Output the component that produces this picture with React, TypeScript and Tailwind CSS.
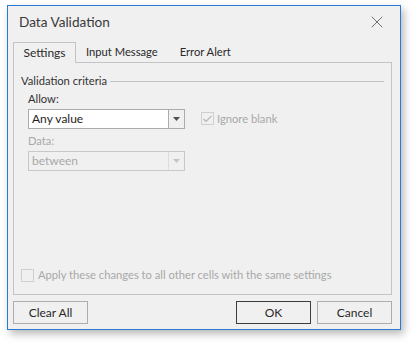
import { X } from 'lucide-react';

function Arrow({ disabled = false }: { disabled?: boolean }) {
  return (
    <svg width="7" height="4" viewBox="0 0 7 4">
      <path d="M0 0h7L3.5 4z" fill={disabled ? '#c4c4c4' : '#505050'} />
    </svg>
  );
}

function Combo({ value, disabled = false }: { value: string; disabled?: boolean }) {
  return (
    <div
      className={`flex h-[20px] w-[157px] border ${
        disabled ? 'border-[#c8c8c8] bg-[#f0f0f0] text-[#a8a8a8]' : 'border-[#acacac] bg-white text-[#1e1e1e]'
      }`}
    >
      <div className="flex-1 pl-[3px] text-[12px] leading-[18px]">{value}</div>
      <div
        className={`flex w-[16px] items-center justify-center border-l ${
          disabled ? 'border-[#dcdcdc]' : 'border-[#acacac]'
        } bg-[#f0f0f0]`}
      >
        <Arrow disabled={disabled} />
      </div>
    </div>
  );
}

function Check({ checked = false }: { checked?: boolean }) {
  return (
    <div className="flex h-[13px] w-[13px] items-center justify-center border border-[#cfcfcf] bg-[#f0f0f0]">
      {checked && (
        <svg width="9" height="8" viewBox="0 0 9 8">
          <path d="M0.5 4l2.5 2.5L8.5 0.8" fill="none" stroke="#b4b4b4" strokeWidth="1.2" />
        </svg>
      )}
    </div>
  );
}

function Btn({ label, main = false }: { label: string; main?: boolean }) {
  return (
    <button
      className={`h-[23px] w-[75px] border bg-[#f0f0f0] text-[12px] text-[#2a2a2a] ${
        main ? 'border-[#3c3c3c]' : 'border-[#adadad]'
      }`}
    >
      {label}
    </button>
  );
}

export default function App() {
  return (
    <div
      className="h-[345px] w-[414px] bg-white pl-[7px] pt-[5px] text-[11.2px] text-[#333]"
      style={{ fontFamily: 'Lato, "Noto Sans", sans-serif' }}
    >
      <div className="flex h-[325px] w-[394px] flex-col border border-[#2b79d0] bg-[#f0f0f0] shadow-[3px_4px_8px_rgba(0,0,0,0.28)]">
        {/* title */}
        <div className="flex h-[36px] items-center justify-between pb-[4px] pl-[11px] pr-[13px]">
          <span className="text-[13.6px] text-[#3a3a3a]">Data Validation</span>
          <X size={20} strokeWidth={1} className="text-[#555]" />
        </div>

        <div className="flex flex-1 flex-col pb-[5px] pl-[5px] pr-[8px]">
          {/* tabs */}
          <div className="flex h-[20px] items-stretch">
            <div className="relative z-10 -mb-px flex h-[21px] w-[63px] items-center justify-center border border-b-0 border-[#c4c4c4] bg-[#f0f0f0] text-[12px] text-[#2a2a2a]">
              Settings
            </div>
            <div className="flex items-center pl-[10px] text-[#2a2a2a]">Input Message</div>
            <div className="flex items-center pl-[22px] text-[#2a2a2a]">Error Alert</div>
          </div>

          {/* panel */}
          <div className="flex h-[233px] flex-col border border-[#c4c4c4] px-[7px] pt-[10px]">
            <div className="flex h-[16px] items-center gap-[3px]">
              <span className="text-[#333]">Validation criteria</span>
              <div className="h-px flex-1 bg-[#c4c4c4]" />
            </div>

            <div className="pl-[7px]">
              <div className="mt-[2px] leading-[16px]">Allow:</div>
              <div className="mt-[2px] flex items-center">
                <Combo value="Any value" />
                <div className="ml-[16px] flex items-center gap-[3px] text-[#a8a8a8]">
                  <Check checked />
                  <span>Ignore blank</span>
                </div>
              </div>
              <div className="mt-[4px] leading-[16px] text-[#a8a8a8]">Data:</div>
              <div className="mt-[2px]">
                <Combo value="between" disabled />
              </div>
            </div>

            <div className="mt-auto mb-[10px] flex items-center gap-[4px] text-[#a8a8a8]">
              <Check />
              <span>Apply these changes to all other cells with the same settings</span>
            </div>
          </div>

          {/* buttons */}
          <div className="mt-[6px] flex items-center">
            <Btn label="Clear All" />
            <div className="flex-1" />
            <Btn label="OK" main />
            <div className="w-[6px]" />
            <Btn label="Cancel" />
          </div>
        </div>
      </div>
    </div>
  );
}
